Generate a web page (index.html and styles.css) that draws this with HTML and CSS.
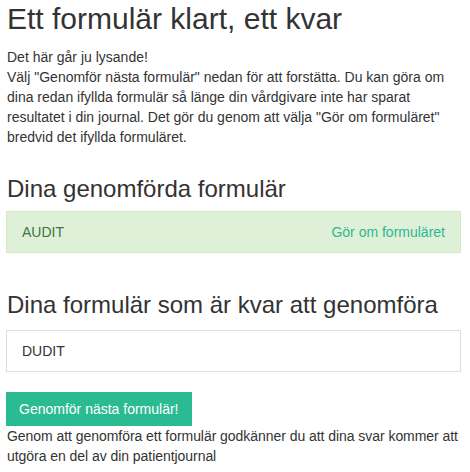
FILE: index.html
```html
<!DOCTYPE html>
<html lang="sv">
<head>
<meta charset="UTF-8">
<meta name="viewport" content="width=device-width, initial-scale=1.0">
<title>Ett formulär klart</title>
<link rel="stylesheet" href="styles.css">
</head>
<body>
    <div class="container">
        <h1>Ett formulär klart, ett kvar</h1>
        <p class="intro">
            Det här går ju lysande!<br>
            Välj "Genomför nästa formulär" nedan för att forstätta. Du kan göra om dina redan ifyllda formulär så länge din vårdgivare inte har sparat resultatet i din journal. Det gör du genom att välja "Gör om formuläret" bredvid det ifyllda formuläret.
        </p>

        <h3 class="section-title">Dina genomförda formulär</h3>
        <ul class="list-group">
            <li class="list-group-item done">
                <span>AUDIT</span>
                <a href="#" class="redo">Gör om formuläret</a>
            </li>
        </ul>

        <h3 class="section-title second">Dina formulär som är kvar att genomföra</h3>
        <ul class="list-group">
            <li class="list-group-item">
                <span>DUDIT</span>
            </li>
        </ul>

        <button type="button" class="btn-next">Genomför nästa formulär!</button>
        <p class="consent">Genom att genomföra ett formulär godkänner du att dina svar kommer att utgöra en del av din patientjournal</p>
    </div>
</body>
</html>
```

FILE: styles.css
```css
body {
    font-family: "Liberation Sans", Arial, sans-serif;
    font-size: 14px;
    line-height: 20px;
    color: #333;
    background-color: #fff;
    margin: 0;
    padding: 0;
}

.container {
    padding: 0 9px 0 6px;
}

h1 {
    font-size: 30px;
    font-weight: normal;
    line-height: 33px;
    margin: 2px 0 12px 1px;
}

.intro {
    margin: 0 0 0 1px;
}

.section-title {
    font-size: 24px;
    font-weight: normal;
    line-height: 26px;
    margin: 29px 0 9px 1px;
}

.section-title.second {
    margin-top: 39px;
    margin-bottom: 12px;
}

.list-group {
    list-style: none;
    margin: 0;
    padding: 0;
}

.list-group-item {
    display: flex;
    justify-content: space-between;
    padding: 10px 15px;
    border: 1px solid #ddd;
}

.list-group-item.done {
    background-color: #dff0d8;
    border-color: #d6e9c6;
    color: #3c763d;
}

.redo {
    color: #2bb88f;
    text-decoration: none;
}

.btn-next {
    display: block;
    margin-top: 20px;
    font-family: inherit;
    font-size: 14px;
    line-height: 20px;
    padding: 6px 12px;
    color: #fff;
    background-color: #2bbb93;
    border: 1px solid #2bbb93;
    border-radius: 0;
    cursor: pointer;
}

.consent {
    margin: 0 -9px 0 1px;
    letter-spacing: -0.05px;
}
```
